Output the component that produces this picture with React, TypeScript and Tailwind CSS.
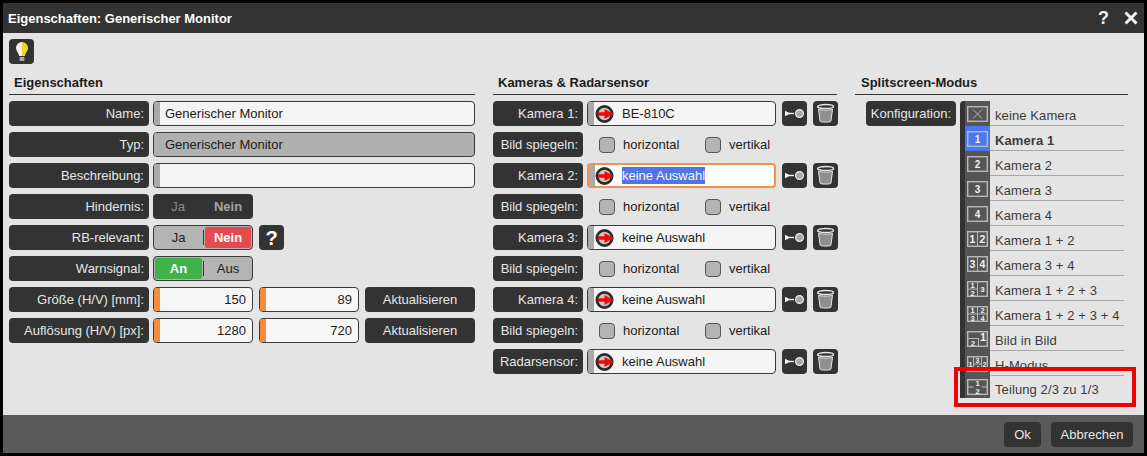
import React from "react";

const labelCls =
  "flex h-[25px] shrink-0 items-center justify-end rounded-[4px] bg-[#333333] pr-[5px] text-[#e6e6e6]";

function Label({ text, width }: { text: string; width: string }) {
  return <div className={`${labelCls} ${width}`}>{text}</div>;
}

function Heading({ text }: { text: string }) {
  return (
    <div className="mb-[6px] h-[23px] border-b border-[#333333] pl-[5px] pt-[2px] text-[13px] font-bold leading-[18px] text-[#1c1c1c]">
      {text}
    </div>
  );
}

function TextField({ value, disabled }: { value: string; disabled?: boolean }) {
  return (
    <div
      className={`flex h-[25px] w-[322px] items-center overflow-hidden rounded-[4px] border border-[#3a3a3a] ${
        disabled ? "bg-[#b0b0b0]" : "bg-[#f4f4f4]"
      }`}
    >
      <div className={`h-full w-[6px] ${disabled ? "bg-[#b0b0b0]" : "bg-[#aaaaaa]"}`} />
      <span className="pl-[5px] text-[#1c1c1c]">{value}</span>
    </div>
  );
}

function NumberField({ value }: { value: string }) {
  return (
    <div className="flex h-[25px] w-[100px] items-center overflow-hidden rounded-[4px] border border-[#3a3a3a] bg-[#f6f6f6]">
      <div className="h-full w-[6px] bg-[#f68b3c]" />
      <span className="flex-1 pr-[6px] text-right text-[#1c1c1c]">{value}</span>
    </div>
  );
}

function DarkButton({ text, width }: { text: string; width: string }) {
  return (
    <div className={`flex h-[25px] items-center justify-center rounded-[4px] bg-[#333333] text-[#e6e6e6] ${width}`}>
      {text}
    </div>
  );
}

function Toggle({ mode }: { mode: "disabled" | "nein" | "an" }) {
  if (mode === "disabled") {
    return (
      <div className="flex h-[25px] w-[100px] items-center rounded-[4px] bg-[#333333]">
        <span className="w-[50px] text-center text-[#8a8a8a]">Ja</span>
        <span className="w-[50px] text-center font-bold text-[#a4a4a4]">Nein</span>
      </div>
    );
  }
  const left = mode === "nein" ? "Ja" : "An";
  const right = mode === "nein" ? "Nein" : "Aus";
  return (
    <div className="flex h-[25px] w-[100px] items-center rounded-[4px] border border-[#3a3a3a] bg-[#b4b4b4] p-px">
      <span
        className={`flex h-full w-[47px] items-center justify-center rounded-[2px] ${
          mode === "an" ? "bg-[#3fb24a] font-bold text-white" : "text-[#1c1c1c]"
        }`}
      >
        {left}
      </span>
      <span className="mx-px h-[15px] w-px bg-[#333333]" />
      <span
        className={`flex h-full flex-1 items-center justify-center rounded-[2px] ${
          mode === "nein" ? "bg-[#e64a50] font-bold text-white" : "text-[#1c1c1c]"
        }`}
      >
        {right}
      </span>
    </div>
  );
}

function TargetIcon() {
  return (
    <svg width="20" height="20" viewBox="0 0 20 20" className="shrink-0">
      <circle cx="9.5" cy="10" r="7.6" fill="#c8c8c8" stroke="#2c2c2c" strokeWidth="2.8" />
      <path d="M3 8.200h6.500V5l9.500 5-9.500 5v-3.200H3z" fill="#f00a0a" />
    </svg>
  );
}

function ConnectButton() {
  return (
    <div className="flex h-[25px] w-[25px] shrink-0 items-center justify-center rounded-[4px] bg-[#333333]">
      <svg width="21" height="13" viewBox="0 0 21 13">
        <path d="M1 3.800l5.500 2.700L1 9.200z" fill="#f2f2f2" />
        <rect x="5" y="5.800" width="5" height="1.400" fill="#f2f2f2" />
        <circle cx="15.500" cy="6.500" r="3.900" fill="#a8a8a8" stroke="#ececec" strokeWidth="1.200" />
      </svg>
    </div>
  );
}

function TrashButton() {
  return (
    <div className="flex h-[25px] w-[25px] shrink-0 items-center justify-center rounded-[4px] bg-[#333333]">
      <svg width="19" height="21" viewBox="0 0 19 21">
        <ellipse cx="9.500" cy="3.500" rx="8" ry="2" fill="#333333" stroke="#e6e6e6" strokeWidth="1.400" />
        <path d="M2.500 6.200c2 1.100 12 1.100 14 0l-1.600 12c-.2 1.200-10.600 1.200-10.800 0z" fill="#8f8f8f" stroke="#e6e6e6" strokeWidth="1" />
      </svg>
    </div>
  );
}

function CameraRow({ label, value, focused }: { label: string; value: string; focused?: boolean }) {
  return (
    <div className="flex h-[25px] items-center">
      <Label text={label} width="w-[90px]" />
      <div
        className={`ml-[4px] flex h-[25px] w-[189px] shrink-0 items-center overflow-hidden rounded-[4px] ${
          focused ? "border-2 border-[#f0934e] bg-white" : "border border-[#3a3a3a] bg-[#f4f4f4]"
        }`}
      >
        <div className="h-full w-[6px] shrink-0 bg-[#aaaaaa]" />
        <div className={focused ? "ml-[0px]" : "ml-px"}>
          <TargetIcon />
        </div>
        {focused ? (
          <span className="ml-[7px] bg-[#4f74e8] leading-[17px] text-[#f4f6ff]">{value}</span>
        ) : (
          <span className="ml-[7px] text-[#1c1c1c]">{value}</span>
        )}
      </div>
      <div className="ml-[6px] shrink-0">
        <ConnectButton />
      </div>
      <div className="ml-[6px] shrink-0">
        <TrashButton />
      </div>
    </div>
  );
}

function Checkbox({ text, width }: { text: string; width: string }) {
  return (
    <div className={`flex items-center ${width}`}>
      <div className="h-[16px] w-[16px] rounded-[4px] border border-[#555555] bg-[#b4b4b4]" />
      <span className="ml-[8px] text-[#1c1c1c]">{text}</span>
    </div>
  );
}

function MirrorRow() {
  return (
    <div className="flex h-[25px] items-center">
      <Label text="Bild spiegeln:" width="w-[90px]" />
      <div className="ml-[16px] flex">
        <Checkbox text="horizontal" width="w-[106px]" />
        <Checkbox text="vertikal" width="w-[80px]" />
      </div>
    </div>
  );
}

type Mark = { x: number; y: number; t: string; s?: number };

function SplitIcon({ lines = "", marks = [] }: { lines?: string; marks?: Mark[] }) {
  return (
    <svg width="21" height="16" viewBox="0 0 21 16">
      <rect x="0.700" y="0.700" width="19.600" height="14.600" fill="none" stroke="#b8b8b8" strokeWidth="1.400" />
      {lines && <path d={lines} fill="none" stroke="#b8b8b8" />}
      {marks.map((m) => (
        <text
          key={m.t + m.x}
          x={m.x}
          y={m.y}
          textAnchor="middle"
          fontSize={m.s ?? 9}
          fontWeight="bold"
          fill="#f2f2f2"
          fontFamily="Liberation Sans, sans-serif"
        >
          {m.t}
        </text>
      ))}
    </svg>
  );
}

const modes: { text: string; icon: React.ReactNode }[] = [
  { text: "keine Kamera", icon: <SplitIcon lines="M6 3.500l9 9M15 3.500l-9 9" /> },
  { text: "Kamera 1", icon: <SplitIcon marks={[{ x: 10.5, y: 11.5, t: "1", s: 10 }]} /> },
  { text: "Kamera 2", icon: <SplitIcon marks={[{ x: 10.5, y: 11.5, t: "2", s: 10 }]} /> },
  { text: "Kamera 3", icon: <SplitIcon marks={[{ x: 10.5, y: 11.5, t: "3", s: 10 }]} /> },
  { text: "Kamera 4", icon: <SplitIcon marks={[{ x: 10.5, y: 11.5, t: "4", s: 10 }]} /> },
  {
    text: "Kamera 1 + 2",
    icon: (
      <SplitIcon
        lines="M10.500 0v16"
        marks={[
          { x: 5.5, y: 12, t: "1", s: 10.5 },
          { x: 15.5, y: 12, t: "2", s: 10.5 },
        ]}
      />
    ),
  },
  {
    text: "Kamera 3 + 4",
    icon: (
      <SplitIcon
        lines="M10.500 0v16"
        marks={[
          { x: 5.5, y: 12, t: "3", s: 10.5 },
          { x: 15.5, y: 12, t: "4", s: 10.5 },
        ]}
      />
    ),
  },
  {
    text: "Kamera 1 + 2 + 3",
    icon: (
      <SplitIcon
        lines="M10.500 0v16M0 8h10.500"
        marks={[
          { x: 5.5, y: 7, t: "1", s: 7.5 },
          { x: 5.5, y: 15, t: "2", s: 7.5 },
          { x: 15.5, y: 11, t: "3", s: 8 },
        ]}
      />
    ),
  },
  {
    text: "Kamera 1 + 2 + 3 + 4",
    icon: (
      <SplitIcon
        lines="M10.500 0v16M0 8h21"
        marks={[
          { x: 5.5, y: 7, t: "1", s: 7.5 },
          { x: 15.5, y: 7, t: "2", s: 7.5 },
          { x: 5.5, y: 15, t: "3", s: 7.5 },
          { x: 15.5, y: 15, t: "4", s: 7.5 },
        ]}
      />
    ),
  },
  {
    text: "Bild in Bild",
    icon: (
      <SplitIcon
        lines="M0 7.500h11.500v8"
        marks={[
          { x: 6, y: 14.5, t: "2", s: 8 },
          { x: 16, y: 10, t: "1", s: 11 },
        ]}
      />
    ),
  },
  {
    text: "H-Modus",
    icon: (
      <SplitIcon
        lines="M6.500 0v16M14.500 0v16M6.500 8h8"
        marks={[
          { x: 3.5, y: 11, t: "1", s: 7 },
          { x: 10.5, y: 7, t: "3", s: 7 },
          { x: 10.5, y: 15, t: "4", s: 7 },
          { x: 17.5, y: 11, t: "2", s: 7 },
        ]}
      />
    ),
  },
  {
    text: "Teilung 2/3 zu 1/3",
    icon: (
      <SplitIcon
        lines="M0 8h6.500M14.500 8h6.500"
        marks={[
          { x: 10.5, y: 7, t: "1", s: 7.5 },
          { x: 10.5, y: 15, t: "2", s: 7.5 },
        ]}
      />
    ),
  },
];

function ModeList() {
  return (
    <div className="ml-[4px] w-[164px] overflow-hidden rounded-tl-[4px] border-l-[5px] border-[#333333]">
      {modes.map((m, i) => (
        <div key={m.text} className={`flex ${i === modes.length - 1 ? "h-[22px]" : "h-[25px]"}`}>
          <div
            className={`flex w-[25px] shrink-0 items-center justify-center ${
              i === 1 ? "bg-[#4a78f0]" : "bg-[#555555]"
            }`}
          >
            {m.icon}
          </div>
          <div
            className={`flex flex-1 items-center pl-[5px] text-[#3c3c3c] tracking-[0.1px] ${
              i === modes.length - 1 ? "pt-[5px]" : "border-b border-[#a8a8a8] pt-[4px]"
            } ${i === 1 ? "font-bold" : ""}`}
          >
            {m.text}
          </div>
        </div>
      ))}
    </div>
  );
}

export default function App() {
  return (
    <div className="h-[456px] w-[1147px] bg-black p-[3px] font-['Liberation_Sans',sans-serif] text-[13px] leading-none">
      <div className="relative flex h-[450px] w-[1141px] flex-col bg-[#e4e4e4]">
        {/* Title bar */}
        <div className="flex h-[30px] shrink-0 items-center justify-between bg-[#333333] pl-[5px] pr-[6px] text-white">
          <span className="text-[13px] font-bold">Eigenschaften: Generischer Monitor</span>
          <div className="flex items-center gap-[15px]">
            <span className="text-[18px] font-bold leading-none text-[#f2f2f2]">?</span>
            <svg width="14" height="14" viewBox="0 0 14 14">
              <path d="M1.500 1.500l11 11M12.500 1.500l-11 11" stroke="#f2f2f2" strokeWidth="3" />
            </svg>
          </div>
        </div>

        {/* Body */}
        <div className="flex-1 px-[6px] pt-[6px]">
          <div className="flex h-[25px] w-[25px] items-center justify-center rounded-[4px] bg-[#333333]">
            <svg width="14" height="22" viewBox="0 0 14 22">
              <path d="M7 1a6 6 0 0 0-6 6c0 3 2.500 4.500 3.200 8H7z" fill="#f4f4f4" />
              <path d="M7 1a6 6 0 0 1 6 6c0 3-2.500 4.500-3.200 8H7z" fill="#f4d81c" />
              <rect x="4.500" y="16" width="5" height="4" rx="1" fill="#a8a8a8" />
            </svg>
          </div>

          <div className="mt-[8px] flex">
            {/* Eigenschaften */}
            <div className="w-[466px]">
              <Heading text="Eigenschaften" />
              <div className="flex flex-col gap-[6px]">
                <div className="flex gap-[4px]">
                  <Label text="Name:" width="w-[140px]" />
                  <TextField value="Generischer Monitor" />
                </div>
                <div className="flex gap-[4px]">
                  <Label text="Typ:" width="w-[140px]" />
                  <TextField value="Generischer Monitor" disabled />
                </div>
                <div className="flex gap-[4px]">
                  <Label text="Beschreibung:" width="w-[140px]" />
                  <TextField value="" />
                </div>
                <div className="flex gap-[4px]">
                  <Label text="Hindernis:" width="w-[140px]" />
                  <Toggle mode="disabled" />
                </div>
                <div className="flex gap-[4px]">
                  <Label text="RB-relevant:" width="w-[140px]" />
                  <Toggle mode="nein" />
                  <div className="ml-[2px] flex h-[25px] w-[25px] items-center justify-center rounded-[4px] bg-[#333333] text-[20px] font-bold text-white">
                    ?
                  </div>
                </div>
                <div className="flex gap-[4px]">
                  <Label text="Warnsignal:" width="w-[140px]" />
                  <Toggle mode="an" />
                </div>
                <div className="flex">
                  <Label text="Größe (H/V) [mm]:" width="w-[140px]" />
                  <div className="ml-[4px] flex gap-[6px]">
                    <NumberField value="150" />
                    <NumberField value="89" />
                    <DarkButton text="Aktualisieren" width="w-[110px]" />
                  </div>
                </div>
                <div className="flex">
                  <Label text="Auflösung (H/V) [px]:" width="w-[140px]" />
                  <div className="ml-[4px] flex gap-[6px]">
                    <NumberField value="1280" />
                    <NumberField value="720" />
                    <DarkButton text="Aktualisieren" width="w-[110px]" />
                  </div>
                </div>
              </div>
            </div>

            {/* Kameras */}
            <div className="ml-[18px] w-[344px]">
              <Heading text="Kameras & Radarsensor" />
              <div className="flex flex-col gap-[6px]">
                <CameraRow label="Kamera 1:" value="BE-810C" />
                <MirrorRow />
                <CameraRow label="Kamera 2:" value="keine Auswahl" focused />
                <MirrorRow />
                <CameraRow label="Kamera 3:" value="keine Auswahl" />
                <MirrorRow />
                <CameraRow label="Kamera 4:" value="keine Auswahl" />
                <MirrorRow />
                <CameraRow label="Radarsensor:" value="keine Auswahl" />
              </div>
            </div>

            {/* Splitscreen */}
            <div className="ml-[18px] w-[273px]">
              <div className="[&>div]:pl-[6px]">
                <Heading text="Splitscreen-Modus" />
              </div>
              <div className="flex pl-[11px]">
                <Label text="Konfiguration:" width="w-[90px]" />
                <ModeList />
              </div>
            </div>
          </div>
        </div>

        {/* Footer */}
        <div className="flex h-[38px] shrink-0 items-center justify-end gap-[10px] bg-[#5a5a5a] pr-[11px]">
          <DarkButton text="Ok" width="w-[37px]" />
          <DarkButton text="Abbrechen" width="w-[82px]" />
        </div>

        {/* annotation over the screenshot */}
        <div className="absolute left-[951px] top-[364px] h-[40px] w-[182px] border-[4px] border-[#f00000]" />
      </div>
    </div>
  );
}
